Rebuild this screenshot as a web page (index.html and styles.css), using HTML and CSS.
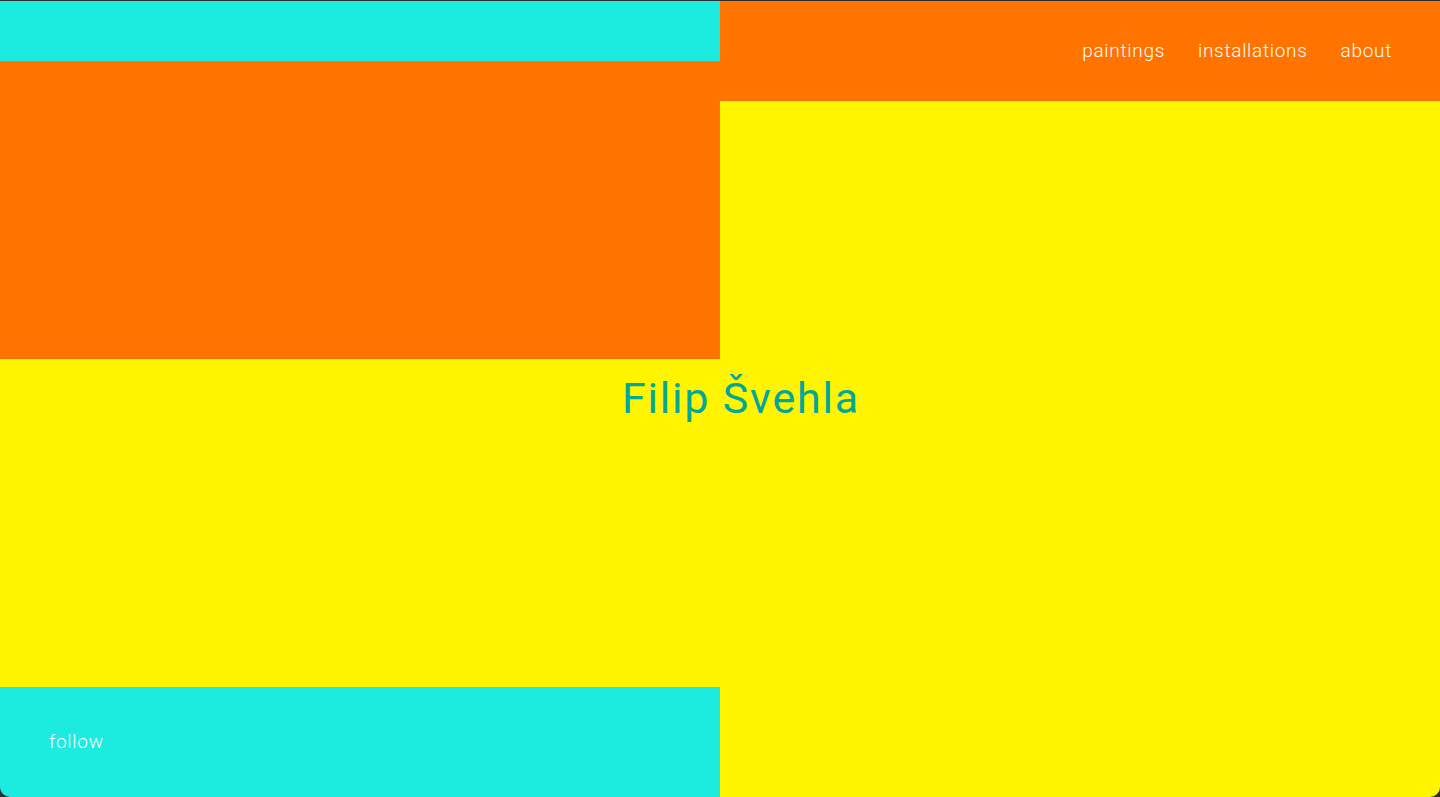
FILE: index.html
```html
<!DOCTYPE html>
<html lang="cs">
<head>
<meta charset="utf-8">
<title>Filip Švehla</title>
<link rel="stylesheet" href="styles.css">
</head>
<body>
<div class="page">
  <div class="col col-left">
    <div class="blk cyan top"></div>
    <div class="blk orange mid"></div>
    <div class="blk yellow low"></div>
    <div class="blk cyan foot"><a class="follow" href="#">follow</a></div>
  </div>
  <div class="col col-right">
    <nav class="blk orange nav">
      <a href="#">paintings</a>
      <a href="#">installations</a>
      <a href="#">about</a>
    </nav>
    <div class="blk yellow rest"></div>
  </div>
  <h1 class="title">Filip Švehla</h1>
</div>
</body>
</html>
```
FILE: styles.css
```css
html, body { margin: 0; padding: 0; }
body {
  background: #2e2e30;
  font-family: Roboto, "Liberation Sans", sans-serif;
  height: 797px;
  overflow: hidden;
}
.page {
  position: relative;
  margin-top: 1px;
  height: 796px;
  display: grid;
  grid-template-columns: 720px 720px;
  border-radius: 0 0 10px 10px;
  overflow: hidden;
}
.col { display: flex; flex-direction: column; }
.cyan { background: #1cebe0; }
.orange { background: #ff7300; }
.yellow { background: #fff500; }
.top { height: 60px; }
.mid { height: 298px; }
.low { height: 328px; }
.foot { flex: 1; padding: 43px 0 0 49px; box-sizing: border-box; }
.nav {
  height: 100px;
  display: flex;
  justify-content: flex-end;
  align-items: flex-start;
  gap: 33px;
  padding: 38px 48px 0 0;
  box-sizing: border-box;
}
.nav a, .follow {
  color: #fff;
  text-decoration: none;
  font-size: 19px;
  font-weight: 300;
  letter-spacing: 0.7px;
}
.rest { flex: 1; }
.title {
  position: absolute;
  left: 0;
  right: 0;
  top: 372px;
  margin: 0;
  padding-left: 42px;
  text-align: center;
  color: #00a89a;
  font-size: 43px;
  font-weight: 400;
  letter-spacing: 1.8px;
}
```
